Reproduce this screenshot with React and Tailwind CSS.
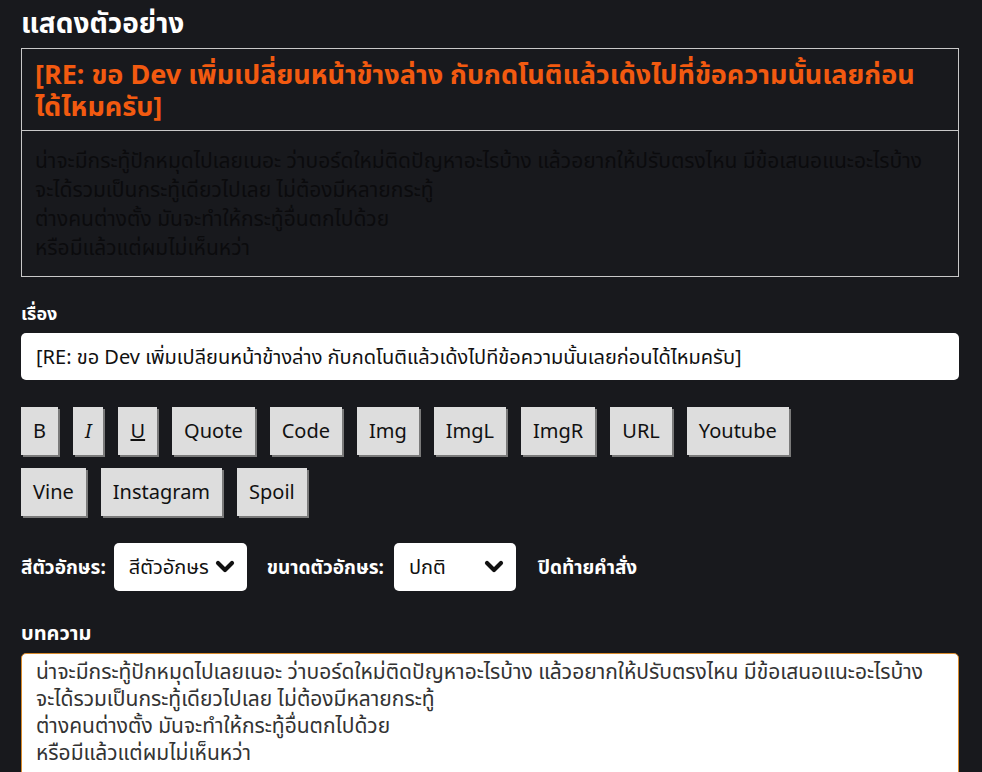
import React from "react";

const btnCls =
  "h-[48px] px-[12px] bg-[#dddddd] text-[#111] text-[20px] leading-none shadow-[2px_2px_0_#7a7a7a]";

function Btn({ children, className = "" }) {
  return <button className={`${btnCls} ${className}`}>{children}</button>;
}

function Chevron() {
  return (
    <svg width="20" height="14" viewBox="0 0 20 14" className="shrink-0">
      <path d="M3 3 L10 10 L17 3" fill="none" stroke="#111" strokeWidth="4.2" strokeLinecap="round" strokeLinejoin="round" />
    </svg>
  );
}

export default function App() {
  const body = [
    "น่าจะมีกระทู้ปักหมุดไปเลยเนอะ ว่าบอร์ดใหม่ติดปัญหาอะไรบ้าง แล้วอยากให้ปรับตรงไหน มีข้อเสนอแนะอะไรบ้าง",
    "จะได้รวมเป็นกระทู้เดียวไปเลย ไม่ต้องมีหลายกระทู้",
    "ต่างคนต่างตั้ง มันจะทำให้กระทู้อื่นตกไปด้วย",
    "หรือมีแล้วแต่ผมไม่เห็นหว่า",
  ];
  return (
    <div
      className="h-[772px] overflow-hidden bg-[#18191d] px-[21px] w-[982px]"
      style={{ fontFamily: '"Noto Sans", "Noto Sans Thai", sans-serif' }}
    >
      <h1 className="text-white font-bold text-[28px] leading-[44px]">แสดงตัวอย่าง</h1>
      <div className="mt-[4px] border border-[#c8c8c8] w-[938px]">
        <div className="pl-[13px] pr-[30px] pt-[9px] pb-[8px] text-[#f25a10] font-bold text-[27px] leading-[32px] border-b border-[#c8c8c8]">
          [RE: ขอ Dev เพิ่มเปลี่ยนหน้าข้างล่าง กับกดโนติแล้วเด้งไปที่ข้อความนั้นเลยก่อนได้ไหมครับ]
        </div>
        <div className="px-[13px] pt-[15px] pb-[14px] text-[#0b0b0d] text-[21px] leading-[29px]">
          {body.map((l, i) => (
            <div key={i}>{l}</div>
          ))}
        </div>
      </div>

      <div className="mt-[23px] text-white font-bold text-[18px] leading-[26px]">เรื่อง</div>
      <div className="mt-[7px] h-[47px] w-[938px] bg-white rounded-[5px] flex items-center px-[15px] text-[20px] text-[#111]">
        [RE: ขอ Dev เพิ่มเปลียนหน้าข้างล่าง กับกดโนติแล้วเด้งไปทีข้อความนั้นเลยก่อนได้ไหมครับ]
      </div>

      <div className="mt-[27px] flex flex-wrap gap-x-[15px] gap-y-[13px] w-[820px]">
        <Btn>B</Btn>
        <Btn className="italic">I</Btn>
        <Btn className="underline">U</Btn>
        <Btn>Quote</Btn>
        <Btn>Code</Btn>
        <Btn>Img</Btn>
        <Btn>ImgL</Btn>
        <Btn>ImgR</Btn>
        <Btn>URL</Btn>
        <Btn>Youtube</Btn>
        <Btn>Vine</Btn>
        <Btn>Instagram</Btn>
        <Btn>Spoil</Btn>
      </div>

      <div className="mt-[27px] flex items-center h-[48px] text-[19px]">
        <span className="text-white font-bold">สีตัวอักษร:</span>
        <div className="ml-[8px] h-[48px] w-[133px] bg-white rounded-[5px] flex items-center justify-between pl-[15px] pr-[12px] text-[#111] text-[20px]">
          <span>สีตัวอักษร</span>
          <Chevron />
        </div>
        <span className="ml-[20px] text-white font-bold">ขนาดตัวอักษร:</span>
        <div className="ml-[10px] h-[48px] w-[122px] bg-white rounded-[5px] flex items-center justify-between pl-[15px] pr-[12px] text-[#111] text-[20px]">
          <span>ปกติ</span>
          <Chevron />
        </div>
        <span className="ml-[22px] text-white font-bold">ปิดท้ายคำสั่ง</span>
      </div>

      <div className="mt-[29px] text-white font-bold text-[20px] leading-[26px]">บทความ</div>
      <div className="mt-[7px] w-[938px] h-[140px] bg-white rounded-[5px] border border-[#d88a2c] px-[14px] pt-[4px] text-[21px] leading-[27px] text-[#333]">
        {body.map((l, i) => (
          <div key={i}>{l}</div>
        ))}
      </div>
    </div>
  );
}
